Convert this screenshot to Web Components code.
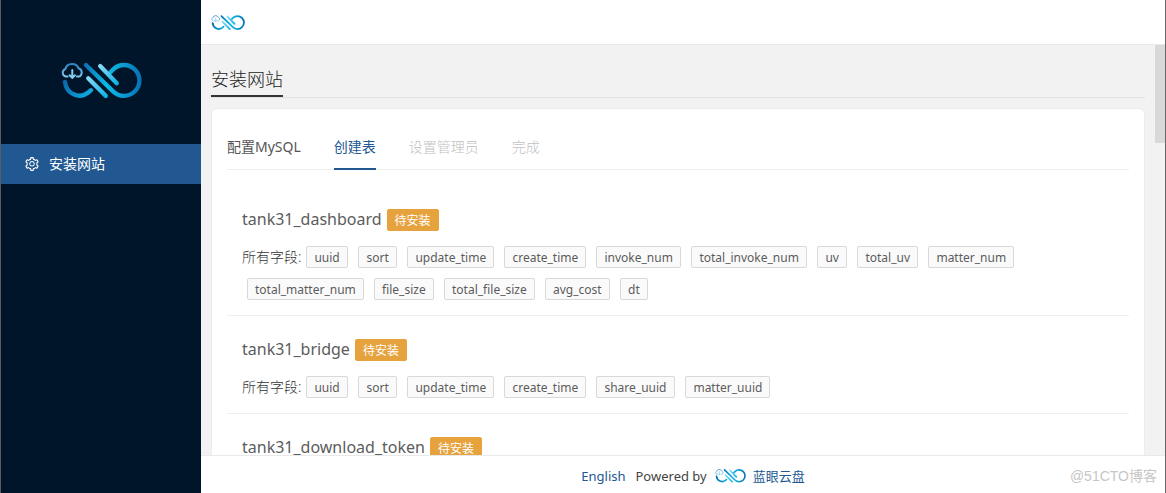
<!DOCTYPE html>
<html lang="zh-CN">
<head>
<meta charset="utf-8">
<title>安装网站 - 蓝眼云盘</title>
<style>
  html, body { margin: 0; height: 100%; }
  body {
    font-family: "Noto Sans", "Noto Sans CJK SC", sans-serif;
    font-size: 14px;
    line-height: 22px;
    color: #555;
    overflow: hidden;
  }
</style>
</head>
<body>
<tank-app>
  <tank-sidebar slot="side"></tank-sidebar>
  <tank-header slot="top"></tank-header>
  <tank-page slot="page" heading="安装网站">
    <tank-tabs></tank-tabs>
    <tank-table-item name="tank31_dashboard" status="待安装"
      fields="uuid sort update_time create_time invoke_num total_invoke_num uv total_uv matter_num total_matter_num file_size total_file_size avg_cost dt"></tank-table-item>
    <tank-table-item name="tank31_bridge" status="待安装"
      fields="uuid sort update_time create_time share_uuid matter_uuid"></tank-table-item>
    <tank-table-item name="tank31_download_token" status="待安装" fields=""></tank-table-item>
  </tank-page>
  <tank-footer slot="bottom"></tank-footer>
</tank-app>

<script>
const define = (name, html, setup) => {
  const template = document.createElement('template');
  template.innerHTML = html;
  customElements.define(name, class extends HTMLElement {
    constructor() {
      super();
      this.attachShadow({ mode: 'open' }).append(template.content.cloneNode(true));
    }
    connectedCallback() {
      if (setup && !this.ready) { this.ready = true; setup(this, this.shadowRoot); }
    }
  });
};

define('tank-logo', `
  <style>
    :host { display: block; width: 81px; }
    svg { display: block; width: 100%; height: auto; }
  </style>
  <svg viewBox="16 16 244 118" fill="none" stroke-linecap="round" aria-hidden="true">
    <defs>
      <linearGradient id="loop" gradientUnits="userSpaceOnUse" x1="88" y1="0" x2="258" y2="0">
        <stop offset="0" stop-color="#0a72b5"/><stop offset=".38" stop-color="#0cb8e6"/>
        <stop offset=".62" stop-color="#0ba3d8"/><stop offset="1" stop-color="#0870b4"/>
      </linearGradient>
      <linearGradient id="left" gradientUnits="userSpaceOnUse" x1="24" y1="70" x2="106" y2="120">
        <stop offset="0" stop-color="#0864a9"/><stop offset="1" stop-color="#0eaee0"/>
      </linearGradient>
      <linearGradient id="barA" gradientUnits="userSpaceOnUse" x1="134" y1="34" x2="184" y2="86">
        <stop offset="0" stop-color="#86d8f6"/><stop offset="1" stop-color="#10b4e4"/>
      </linearGradient>
      <linearGradient id="barB" gradientUnits="userSpaceOnUse" x1="98" y1="71" x2="151" y2="124">
        <stop offset="0" stop-color="#86d8f6"/><stop offset="1" stop-color="#10b4e4"/>
      </linearGradient>
      <linearGradient id="cloud" x1="0" y1="0" x2="0" y2="1">
        <stop offset="0" stop-color="#2e83bf"/><stop offset="1" stop-color="#7cc4ea"/>
      </linearGradient>
    </defs>
    <path stroke="url(#left)" stroke-width="13" d="M28 82A44 46 0 0 0 98 114L106 107"/>
    <path stroke="url(#loop)" stroke-width="13" d="M91 31L173 110.500A46.500 46.500 0 1 0 173 44.500L164 54"/>
    <path stroke="url(#barA)" stroke-width="13" d="M134 34L184 86"/>
    <path stroke="url(#barB)" stroke-width="13" d="M98 71L151 124"/>
    <path stroke="url(#cloud)" stroke-width="6" d="M36 66H31A12 12 0 0 1 29 43A21 20 0 0 1 69 41A13 13 0 0 1 69 66H64"/>
    <path stroke="#86cdf0" stroke-width="6" d="M50 46V70M42 62L50 70L58 62"/>
  </svg>`);

define('tank-app', `
  <style>
    :host {
      display: grid; position: relative; height: 100vh; box-sizing: border-box;
      grid-template-columns: 200px minmax(0, 1fr);
      border-left: 1px solid #5c5c5c; border-right: 1px solid #666;
      background: #f2f2f2;
    }
    .column { display: flex; flex-direction: column; min-height: 0; }
    .view { display: flex; flex: 1; min-height: 0; overflow: hidden; }
    ::slotted([slot=page]) { flex: 1; min-width: 0; }
    .track { width: 10px; }
    .thumb { height: 24%; background: #d9d9d9; }
    .mark {
      position: absolute; right: 8px; bottom: 6px;
      font: 14px/22px "Liberation Sans", "Noto Sans CJK SC", sans-serif; color: #c6c6c6;
    }
  </style>
  <slot name="side"></slot>
  <div class="column">
    <slot name="top"></slot>
    <div class="view">
      <slot name="page"></slot>
      <div class="track"><div class="thumb"></div></div>
    </div>
    <slot name="bottom"></slot>
  </div>
  <span class="mark">@51CTO博客</span>`);

define('tank-sidebar', `
  <style>
    :host { display: block; background: #001529; }
    .brand { display: flex; align-items: center; justify-content: center; height: 144px; padding-top: 16px; box-sizing: border-box; }
    a {
      display: flex; align-items: center; gap: 10px; height: 40px; padding-left: 24px;
      background: #215891; color: #fff; text-decoration: none;
    }
    svg { width: 14px; height: 14px; fill: currentColor; }
  </style>
  <div class="brand"><tank-logo></tank-logo></div>
  <nav><a href="#install">
    <svg viewBox="64 64 896 896" aria-hidden="true"><path d="M924.8 625.7l-65.500-56c3.100-19 4.700-38.400 4.700-57.800s-1.600-38.800-4.700-57.800l65.500-56a32.030 32.030 0 0 0 9.300-35.200l-.9-2.600a443.740 443.740 0 0 0-79.700-137.900l-1.800-2.100a32.120 32.120 0 0 0-35.100-9.500l-81.300 28.900c-30-24.600-63.500-44-99.700-57.600l-15.700-85a32.050 32.050 0 0 0-25.800-25.700l-2.700-.5c-52.100-9.400-106.900-9.400-159 0l-2.700.5a32.050 32.050 0 0 0-25.800 25.700l-15.800 85.400a351.860 351.860 0 0 0-99 57.400l-81.900-29.100a32 32 0 0 0-35.100 9.500l-1.800 2.100a446.020 446.020 0 0 0-79.700 137.900l-.9 2.600c-4.500 12.500-.8 26.500 9.300 35.200l66.300 56.600c-3.100 18.800-4.600 38-4.600 57.100 0 19.200 1.500 38.400 4.600 57.100L99 625.500a32.030 32.030 0 0 0-9.300 35.200l.9 2.600c18.100 50.400 44.900 96.900 79.700 137.900l1.800 2.100a32.120 32.120 0 0 0 35.100 9.500l81.900-29.100c29.800 24.500 63.100 43.900 99 57.400l15.800 85.400a32.050 32.050 0 0 0 25.800 25.700l2.700.5a449.400 449.400 0 0 0 159 0l2.700-.5a32.050 32.050 0 0 0 25.800-25.700l15.700-85a350 350 0 0 0 99.700-57.600l81.300 28.900a32 32 0 0 0 35.100-9.500l1.800-2.100c34.800-41.100 61.600-87.500 79.700-137.900l.9-2.600c4.500-12.300.8-26.300-9.300-35zM788.300 465.900c2.500 15.100 3.800 30.600 3.800 46.100s-1.300 31-3.800 46.100l-6.600 40.100 74.700 63.900a370.030 370.030 0 0 1-42.600 73.600L721 702.800l-31.400 25.800c-23.900 19.600-50.500 35-79.300 45.800l-38.100 14.300-17.900 97a377.500 377.500 0 0 1-85 0l-17.900-97.200-37.800-14.500c-28.500-10.800-55-26.200-78.700-45.700l-31.400-25.900-93.400 33.200c-17-22.900-31.200-47.600-42.600-73.600l75.500-64.500-6.500-40c-2.400-14.900-3.700-30.300-3.700-45.500 0-15.300 1.200-30.600 3.700-45.500l6.500-40-75.500-64.500c11.300-26.100 25.600-50.700 42.600-73.600l93.400 33.200 31.400-25.900c23.700-19.500 50.200-34.900 78.700-45.700l37.900-14.300 17.900-97.200c28.100-3.200 56.800-3.200 85 0l17.900 97 38.100 14.300c28.700 10.800 55.400 26.200 79.300 45.800l31.400 25.800 92.800-32.900c17 22.900 31.200 47.600 42.600 73.600L781.800 426l6.500 39.900zM512 326c-97.200 0-176 78.800-176 176s78.800 176 176 176 176-78.800 176-176-78.800-176-176-176zm79.200 255.200A111.600 111.600 0 0 1 512 614c-29.900 0-58-11.700-79.200-32.800A111.600 111.600 0 0 1 400 502c0-29.900 11.700-58 32.800-79.200C454 401.600 482.100 390 512 390c29.900 0 58 11.600 79.200 32.800A111.600 111.600 0 0 1 624 502c0 29.900-11.700 58-32.800 79.200z"/></svg>
    安装网站</a></nav>`);

define('tank-header', `
  <style>
    :host { display: flex; align-items: center; height: 44px; padding-left: 10px; background: #fff; border-bottom: 1px solid #e9e9e9; }
    tank-logo { width: 34px; }
  </style>
  <tank-logo></tank-logo>`);

define('tank-page', `
  <style>
    :host { display: block; padding: 20px 10px 0; }
    header { display: flex; border-bottom: 1px solid #e2e2e2; }
    h1 {
      margin: 0; padding-bottom: 2px; font-size: 18px; line-height: 28px; font-weight: 300;
      color: #222; border-bottom: 2px solid #333;
    }
    .card {
      margin-top: 10px; padding: 15px; background: #fff;
      border: 1px solid #ececec; border-radius: 6px;
    }
  </style>
  <header><h1></h1></header>
  <div class="card"><slot></slot></div>`,
  (host, root) => { root.querySelector('h1').textContent = host.getAttribute('heading'); });

define('tank-tabs', `
  <style>
    :host { display: flex; gap: 33px; margin-bottom: 16px; box-shadow: inset 0 -1px #eee; }
    button {
      padding: 12px 0 10px; border: 0; border-bottom: 2px solid transparent; background: none;
      font: inherit; color: #555;
    }
    .on { color: #215891; border-color: #215891; }
    :disabled { color: #bfbfbf; font-weight: 300; }
  </style>
  <button type="button">配置MySQL</button>
  <button type="button" class="on">创建表</button>
  <button type="button" disabled>设置管理员</button>
  <button type="button" disabled>完成</button>`);

define('tank-tag', `
  <style>
    :host {
      display: block; box-sizing: border-box; height: 22px; padding: 1px 7px 0;
      border: 1px solid #d9d9d9; border-radius: 2px; background: #fafafa;
      font-size: 12px; line-height: 20px; font-weight: 400; color: #5c5c5c; white-space: nowrap;
    }
    :host([solid]) { background: #e6a23c; border-color: #e6a23c; color: #fff; }
  </style>
  <slot></slot>`);

define('tank-table-item', `
  <style>
    :host { display: block; padding: 23px 15px 15px; border-bottom: 1px solid #eee; }
    .title { display: flex; gap: 5px; margin-bottom: 15px; }
    h2 { margin: 0; font-size: 16px; line-height: 20px; font-weight: 400; color: #5c5c5c; }
    .fields { display: flex; flex-wrap: wrap; gap: 10px; }
    .first { display: flex; gap: 5px; }
    .first span { font-weight: 300; color: #333; }
    .wrapped { margin-left: 5px; }
  </style>
  <div class="title"><h2></h2><tank-tag solid></tank-tag></div>
  <div class="fields"><div class="first"><span>所有字段:</span></div></div>`,
  (host, root) => {
    root.querySelector('h2').textContent = host.getAttribute('name');
    root.querySelector('tank-tag').textContent = host.getAttribute('status');
    const fields = root.querySelector('.fields');
    const names = host.getAttribute('fields').split(' ').filter(Boolean);
    const tags = names.map((name, i) => {
      const tag = document.createElement('tank-tag');
      tag.textContent = name;
      (i ? fields : root.querySelector('.first')).append(tag);
      return tag;
    });
    // Whole-pixel widths keep the tag borders crisp.
    const widths = tags.map(tag => Math.ceil(tag.getBoundingClientRect().width));
    tags.forEach((tag, i) => { tag.style.minWidth = widths[i] + 'px'; });
    // A tag that opens a new line keeps its left margin.
    const top = fields.offsetTop;
    const next = tags.find(tag => tag.offsetTop > top + 10);
    if (next) next.classList.add('wrapped');
  });

define('tank-footer', `
  <style>
    :host {
      display: flex; align-items: center; justify-content: center; padding: 2px 0 0 20px;
      box-sizing: border-box; height: 38px;
      background: #fff; border-top: 1px solid #e9e9e9; font-size: 13px; color: #444;
    }
    a { color: #215891; text-decoration: none; }
    .lang { margin-right: 10px; }
    tank-logo { width: 31px; margin: 0 7px 0 8px; }
  </style>
  <a class="lang" href="#en">English</a><span>Powered by</span><tank-logo></tank-logo><a href="#tank">蓝眼云盘</a>`);
</script>
</body>
</html>
